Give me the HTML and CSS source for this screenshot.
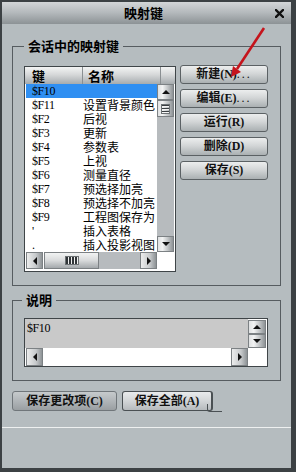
FILE: index.html
```html
<!DOCTYPE html>
<html lang="zh-CN">
<head>
  <meta charset="UTF-8" />
  <meta name="viewport" content="width=device-width, initial-scale=1.0"/>
  <title>映射键</title>
  <link rel="stylesheet" href="styles.css">
</head>
<body>
  <div class="window">
    <div class="titlebar">
      <span class="title">映射键</span>
      <svg class="close" width="9" height="9" viewBox="0 0 9 9">
        <path d="M1 1 L8 8 M8 1 L1 8" stroke="#111" stroke-width="2.4" stroke-linecap="square"/>
      </svg>
    </div>

    <div class="body">
      <!-- session keys -->
      <fieldset class="group group-keys">
        <legend>会话中的映射键</legend>
        <div class="keys-row">
          <div class="listbox">
            <div class="list-head">
              <span class="head-cell head-key">键</span>
              <span class="head-cell head-name">名称</span>
              <span class="head-rest"></span>
            </div>
            <div class="list-main">
              <div class="rows">
                <div class="row selected"><span class="cell-key">$F10</span><span class="cell-name"></span></div>
                <div class="row"><span class="cell-key">$F11</span><span class="cell-name">设置背景颜色</span></div>
                <div class="row"><span class="cell-key">$F2</span><span class="cell-name">后视</span></div>
                <div class="row"><span class="cell-key">$F3</span><span class="cell-name">更新</span></div>
                <div class="row"><span class="cell-key">$F4</span><span class="cell-name">参数表</span></div>
                <div class="row"><span class="cell-key">$F5</span><span class="cell-name">上视</span></div>
                <div class="row"><span class="cell-key">$F6</span><span class="cell-name">测量直径</span></div>
                <div class="row"><span class="cell-key">$F7</span><span class="cell-name">预选择加亮</span></div>
                <div class="row"><span class="cell-key">$F8</span><span class="cell-name">预选择不加亮</span></div>
                <div class="row"><span class="cell-key">$F9</span><span class="cell-name">工程图保存为</span></div>
                <div class="row"><span class="cell-key">'</span><span class="cell-name">插入表格</span></div>
                <div class="row"><span class="cell-key">.</span><span class="cell-name">插入投影视图</span></div>
              </div>
              <div class="vscroll">
                <div class="sb-btn v-btn"><span class="arrow-up"></span></div>
                <div class="thumb-v"><span class="grip-h"></span></div>
                <div class="track"></div>
                <div class="sb-btn v-btn"><span class="arrow-down"></span></div>
              </div>
            </div>
            <div class="list-foot">
              <div class="hscroll">
                <div class="sb-btn h-btn"><span class="arrow-left"></span></div>
                <div class="thumb-h"><span class="grip-v"></span></div>
                <div class="track"></div>
                <div class="sb-btn h-btn"><span class="arrow-right"></span></div>
              </div>
            </div>
          </div>

          <div class="actions">
            <button class="btn">新建(N)<span class="dots">...</span></button>
            <button class="btn">编辑(E)<span class="dots">...</span></button>
            <button class="btn">运行(R)</button>
            <button class="btn">删除(D)</button>
            <button class="btn">保存(S)</button>
          </div>
        </div>
      </fieldset>

      <!-- description -->
      <fieldset class="group group-desc">
        <legend>说明</legend>
        <div class="desc">
          <div class="desc-top">
            <div class="desc-text">$F10</div>
            <div class="desc-vscroll">
              <div class="sb-btn dv-btn"><span class="arrow-up"></span></div>
              <div class="sb-btn dv-btn"><span class="arrow-down"></span></div>
            </div>
          </div>
          <div class="desc-bottom">
            <div class="sb-btn dh-btn"><span class="arrow-left"></span></div>
            <div class="desc-track"></div>
            <div class="sb-btn dh-btn"><span class="arrow-right"></span></div>
          </div>
        </div>
      </fieldset>

      <div class="save-row">
        <button class="btn-save">保存更改项(C)</button>
        <button class="btn-save btn-save-all">保存全部(A)</button>
      </div>
    </div>

    <div class="sep"></div>

    <!-- annotation arrow -->
    <svg class="pointer" width="296" height="472" viewBox="0 0 296 472">
      <line x1="264" y1="28" x2="237" y2="69" stroke="#c5141c" stroke-width="2.6"/>
      <polygon points="231,77 241,72 233,66" fill="#c5141c"/>
    </svg>
  </div>
</body>
</html>
```

FILE: styles.css
```css
* {
  box-sizing: border-box;
}

body {
  margin: 0;
  background: #3c4144;
  font-family: "Liberation Serif", "Noto Sans CJK SC", serif;
  font-size: 12px;
  color: #000;
}

.window {
  position: relative;
  width: 296px;
  height: 472px;
  border-style: solid;
  border-color: #3c4144;
  border-width: 2px 5px 4px 2px;
  background: #b5bcbf;
  display: flex;
  flex-direction: column;
}

.titlebar {
  height: 22px;
  display: flex;
  align-items: center;
  background: linear-gradient(#d3d6d8, #b3b8bb 50%, #8c9295);
}

.title {
  flex: 1;
  text-align: center;
  padding-left: 10px;
  font-family: "Noto Sans CJK SC", sans-serif;
  font-weight: bold;
  font-size: 13px;
  line-height: 16px;
}

.close {
  margin-right: 7px;
}

.body {
  padding: 14px 10px 0 10px;
}

.group {
  margin: 0;
  min-width: 0;
  border: 1px solid #565c60;
}

.group legend {
  padding: 0 4px;
  font-family: "Noto Sans CJK SC", sans-serif;
  font-weight: bold;
  font-size: 13px;
  line-height: 16px;
}

.group-keys {
  padding: 11px 11px 13px 11px;
}

.group-desc {
  margin-top: 6px;
  padding: 10px 11px 13px 11px;
}

.group-desc legend {
  margin-left: -2px;
}

.keys-row {
  display: flex;
  gap: 4px;
}

/* list */
.listbox {
  width: 152px;
  height: 206px;
  margin-top: 1px;
  border: 1px solid #3f4548;
  background: #fff;
  display: flex;
  flex-direction: column;
}

.list-head {
  height: 17px;
  display: flex;
  background: linear-gradient(#f3f4f4, #d6d8d9 45%, #a6abae);
  font-family: "Noto Sans CJK SC", sans-serif;
  font-weight: bold;
  font-size: 13px;
  line-height: 17px;
}

.head-cell {
  border-right: 1px solid #8a8f92;
}

.head-key {
  width: 58px;
  padding-left: 7px;
}

.head-name {
  width: 78px;
  padding-left: 5px;
}

.head-rest {
  flex: 1;
}

.list-main {
  height: 168px;
  display: flex;
}

.rows {
  width: 132px;
  padding-left: 1px;
  overflow: hidden;
}

.row {
  display: flex;
  height: 14px;
  line-height: 14px;
  white-space: nowrap;
}

.row.selected {
  background: #2f8ff2;
}

.cell-key {
  flex: none;
  width: 57px;
  padding-left: 6px;
  letter-spacing: -0.4px;
}

.cell-name {
  flex: none;
  font-family: "Noto Sans CJK SC", sans-serif;
}

.vscroll {
  width: 17px;
  display: flex;
  flex-direction: column;
}

.track {
  flex: 1;
  background: #b7bbbe;
}

.sb-btn {
  display: flex;
  align-items: center;
  justify-content: center;
  border: 1px solid #7c8184;
  background: linear-gradient(to right, #dfe1e2, #f2f3f3 30%, #c2c5c7 65%, #8e9396);
}

.v-btn {
  height: 16px;
}

.thumb-v {
  height: 17px;
  display: flex;
  align-items: center;
  justify-content: center;
  border: 1px solid #7c8184;
  background: linear-gradient(to right, #dfe1e2, #f2f3f3 30%, #c2c5c7 65%, #8e9396);
}

.grip-h {
  width: 9px;
  height: 10px;
  background: repeating-linear-gradient(#3a3f42 0 1px, #f4f4f4 1px 2px, transparent 2px 3px);
  border: 1px solid #6c7174;
}

.list-foot {
  height: 19px;
  padding-left: 1px;
}

.hscroll {
  width: 131px;
  height: 17px;
  display: flex;
}

.h-btn {
  width: 17px;
  background: linear-gradient(to right, #eceded, #c6c9cb 60%, #8e9396);
}

.thumb-h {
  width: 55px;
  margin-left: 1px;
  display: flex;
  align-items: center;
  justify-content: center;
  border: 1px solid #7c8184;
  background: linear-gradient(#f2f3f3, #d8dadb 50%, #a4a9ac);
}

.grip-v {
  width: 14px;
  height: 9px;
  background: repeating-linear-gradient(to right, #2f3437 0 2px, #f0f0f0 2px 3px);
  border: 1px solid #6c7174;
}

.arrow-up,
.arrow-down,
.arrow-left,
.arrow-right {
  width: 0;
  height: 0;
  border-style: solid;
}

.arrow-up {
  border-width: 0 4px 4px 4px;
  border-color: transparent transparent #111 transparent;
}

.arrow-down {
  border-width: 4px 4px 0 4px;
  border-color: #111 transparent transparent transparent;
}

.arrow-left {
  border-width: 4px 4px 4px 0;
  border-color: transparent #111 transparent transparent;
}

.arrow-right {
  border-width: 4px 0 4px 4px;
  border-color: transparent transparent transparent #111;
}

/* buttons */
.actions {
  display: flex;
  flex-direction: column;
  gap: 5px;
}

.btn {
  width: 88px;
  height: 19px;
  padding: 0;
  border: 1px solid #5b6164;
  border-radius: 3px;
  background: linear-gradient(#eceeee, #d3d6d7 45%, #aab0b2);
  font-family: "Liberation Serif", "Noto Sans CJK SC", serif;
  font-weight: bold;
  font-size: 12px;
  line-height: 17px;
  color: #111;
  white-space: nowrap;
}

.dots {
  letter-spacing: 2px;
  font-weight: normal;
}

/* description */
.desc {
  width: 244px;
  height: 49px;
  border: 1px solid #3f4548;
  background: #fff;
  display: flex;
  flex-direction: column;
}

.desc-top {
  height: 29px;
  display: flex;
}

.desc-text {
  width: 223px;
  background: #c9c9c9;
  padding: 2px 2px;
  font-size: 12px;
  line-height: 14px;
  letter-spacing: -0.4px;
}

.desc-vscroll {
  width: 18px;
  padding-top: 1px;
  display: flex;
  flex-direction: column;
}

.dv-btn {
  height: 14px;
}

.desc-bottom {
  height: 18px;
  padding-left: 1px;
  display: flex;
}

.dh-btn {
  width: 17px;
  background: linear-gradient(to right, #eceded, #c6c9cb 60%, #8e9396);
}

.desc-track {
  width: 188px;
  background: #fff;
}

/* bottom row */
.save-row {
  display: flex;
  gap: 5px;
  margin-top: 10px;
}

.btn-save {
  position: relative;
  width: 105px;
  height: 20px;
  padding: 0;
  border: 1px solid #70767a;
  border-radius: 3px;
  background: linear-gradient(#c6cacc, #b0b5b8 50%, #9a9fa2);
  font-family: "Liberation Serif", "Noto Sans CJK SC", serif;
  font-weight: bold;
  font-size: 12px;
  line-height: 18px;
  color: #111;
  white-space: nowrap;
}

.btn-save-all {
  width: 91px;
  border-color: #4a5053;
  border-right-width: 2px;
  background: linear-gradient(#e9ebec, #d2d5d7 50%, #b6babd);
}

.btn-save-all::after {
  content: "";
  position: absolute;
  left: 84px;
  top: 12px;
  width: 14px;
  height: 7px;
  border-left: 1px solid #4a5053;
  border-bottom: 1px solid #4a5053;
  border-bottom-left-radius: 3px;
}

.sep {
  margin-top: 16px;
  height: 1px;
  background: #eef0f0;
}

.pointer {
  position: absolute;
  left: -2px;
  top: -2px;
  pointer-events: none;
}
```
